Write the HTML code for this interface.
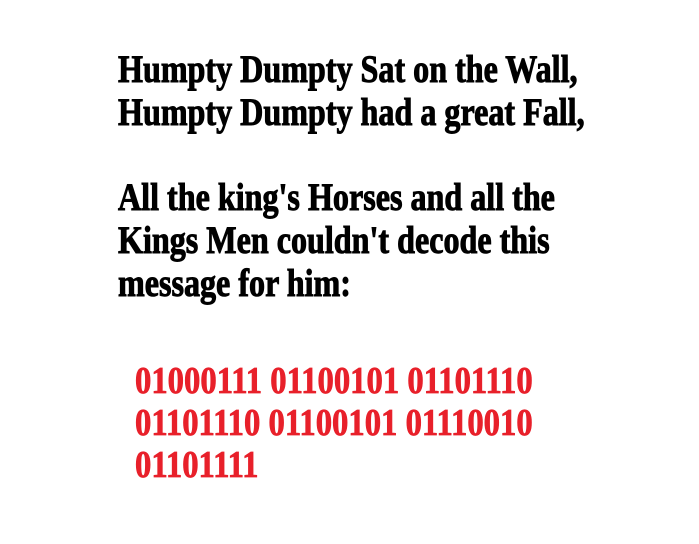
<!DOCTYPE html>
<html><head><style>
html,body{margin:0;padding:0;background:#fff;width:699px;height:544px;overflow:hidden;position:relative}
.l{position:absolute;white-space:nowrap;font-family:"Liberation Serif",serif;font-weight:bold;font-size:39px;line-height:39px;transform-origin:0 0;transform:scaleX(0.823);color:#000;-webkit-text-stroke:1px #000}
.r{color:#e8202a;font-size:38px;transform:scaleX(0.86);-webkit-text-stroke:0.8px #e8202a}
</style></head><body>
<div class="l" style="left:118px;top:50px">Humpty Dumpty Sat on the Wall,</div>
<div class="l" style="left:118px;top:93px">Humpty Dumpty had a great Fall,</div>
<div class="l" style="left:118px;top:178px">All the king's Horses and all the</div>
<div class="l" style="left:118px;top:221px">Kings Men couldn't decode this</div>
<div class="l" style="left:118px;top:264px">message for him:</div>
<div class="l r" style="left:135px;top:362px">01000111 01100101 01101110</div>
<div class="l r" style="left:135px;top:404px">01101110 01100101 01110010</div>
<div class="l r" style="left:135px;top:446px">01101111</div>
</body></html>
